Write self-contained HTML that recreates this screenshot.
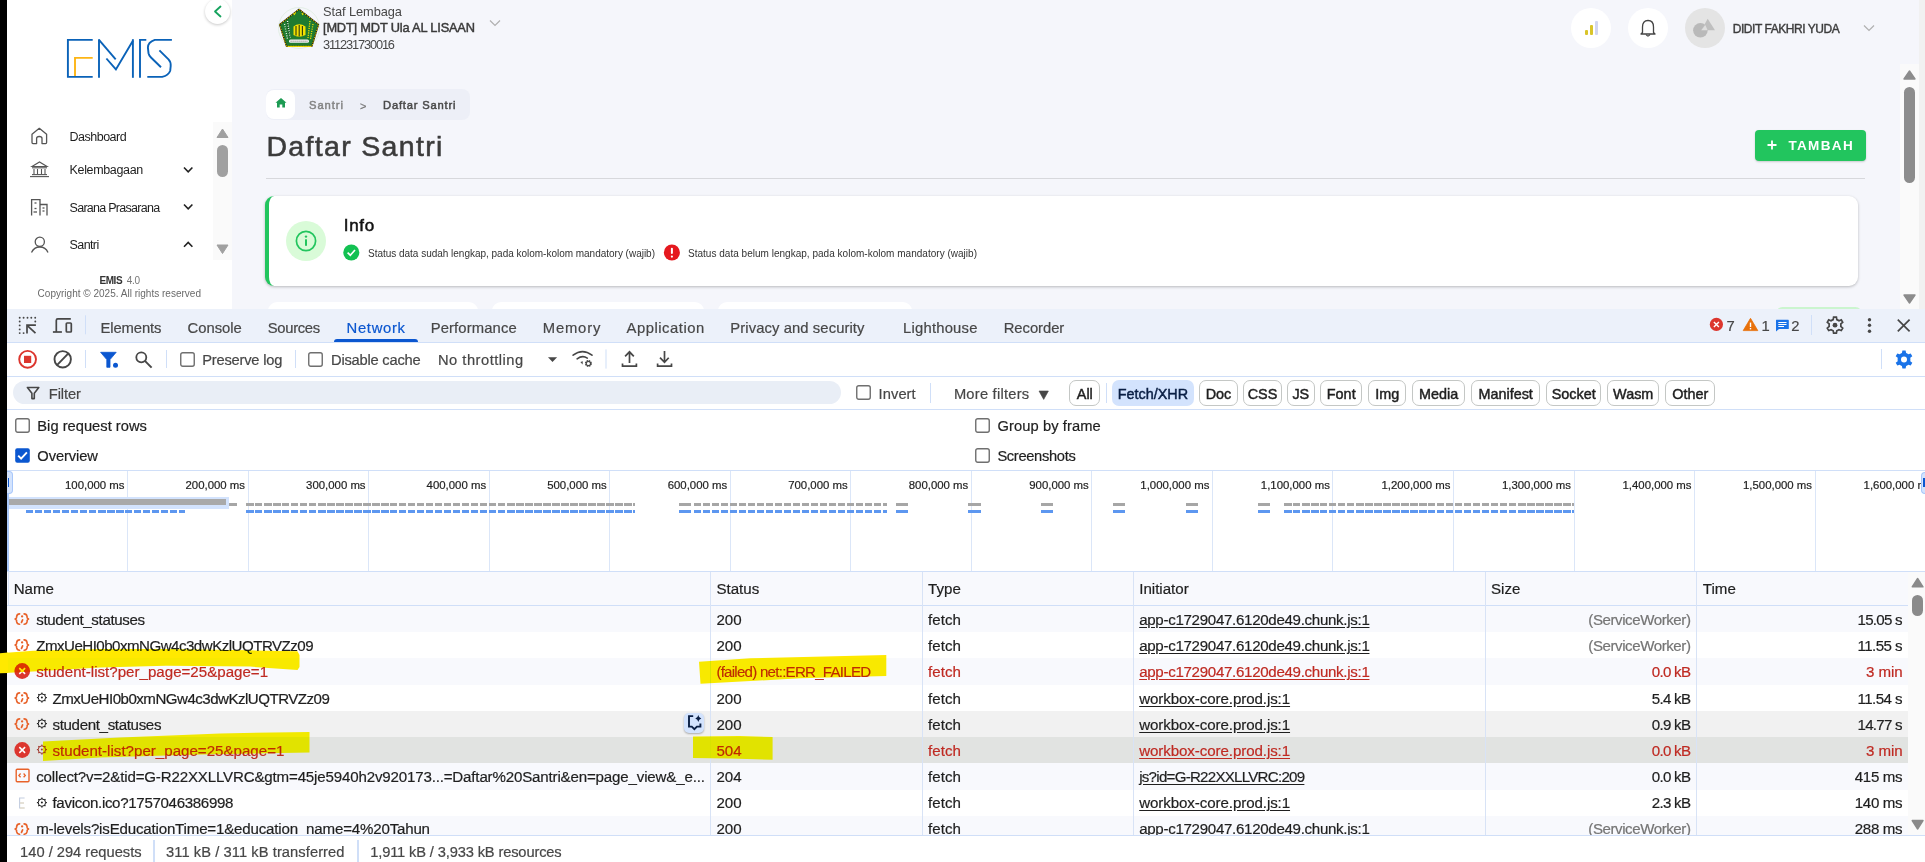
<!DOCTYPE html>
<html><head><meta charset="utf-8"><title>Daftar Santri - EMIS</title>
<style>
html,body{margin:0;padding:0;}
body{width:1925px;height:862px;overflow:hidden;position:relative;background:#fff;font-family:"Liberation Sans",sans-serif;}
.r{position:absolute;display:block;}
.t{position:absolute;white-space:nowrap;line-height:1;}
.dv .t{-webkit-text-stroke:0.2px currentColor;}
svg.r{overflow:visible;}
.hl{mix-blend-mode:darken;}
</style></head><body>

<div class="r" style="left:0;top:0;width:7px;height:862px;background:#000;z-index:5"></div>
<div class="r" style="left:0;top:0;width:1925px;height:309px;overflow:hidden">
<div class="r" style="left:7.00px;top:0.00px;width:225.00px;height:309.00px;background:#ffffff;"></div>
<div class="r" style="left:232.00px;top:0.00px;width:1687.00px;height:309.00px;background:#f5f6fb;"></div>
<div class="r" style="left:1919.00px;top:0.00px;width:6.00px;height:309.00px;background:#f1f1f1;"></div>
<svg class="r" style="left:60.00px;top:32.00px;" width="120" height="52" viewBox="0 0 120 52"><g fill="none" stroke="#0a62b8" stroke-width="1.9" stroke-linecap="butt" stroke-linejoin="miter"><polyline points="32.7,7.9 7.9,7.9 7.9,44.9 32.7,44.9"/><polyline points="39,7.2 39,45.8"/><polyline points="39,7.9 55.7,27.4"/><polyline points="46.4,26.5 55.9,37.4 72.9,8.7"/><polyline points="72.9,7.2 72.9,45.8"/><polyline points="86.3,7.9 80,7.9 80,45.8"/><path d="M111.9,7.9 L94.8,7.9 Q88,10 87.9,15.6 L88.5,21.2 Q89,23.5 91,25.5 L101,35.2"/><path d="M99.4,18.4 L108.5,27.4 Q111,30 110.7,34 L110.2,38.7 Q108.5,43.5 102.2,44.9 L87.3,44.9"/></g><polyline fill="none" stroke="#fdb515" stroke-width="1.9" points="32.7,25.9 15,25.9 15,44"/></svg>
<div class="r" style="left:205px;top:-1px;width:25px;height:25px;border-radius:50%;background:#fff;box-shadow:0 1px 3px rgba(0,0,0,.22)"></div>
<svg class="r" style="left:212.00px;top:5.00px;" width="12" height="13" viewBox="0 0 12 13"><polyline points="8.5,1.5 3,6.5 8.5,11.5" fill="none" stroke="#16a35e" stroke-width="1.8" stroke-linecap="round" stroke-linejoin="round"/></svg>
<svg class="r" style="left:30.00px;top:127.00px;" width="19" height="18" viewBox="0 0 19 18"><path d="M2,15.6 L2,7.2 L9.3,1.3 L16.6,7.2 L16.6,15.6 Q16.6,16.6 15.6,16.6 L12,16.6 L12,11.5 Q12,9.5 9.3,9.5 Q6.6,9.5 6.6,11.5 L6.6,16.6 L3,16.6 Q2,16.6 2,15.6 Z" fill="none" stroke="#555" stroke-width="1.3" stroke-linejoin="round"/></svg>
<svg class="r" style="left:29.00px;top:161.00px;" width="21" height="17" viewBox="0 0 21 17"><g fill="none" stroke="#555" stroke-width="1.1"><path d="M3,5.5 L10.5,1 L18,5.5 Z"/><line x1="3" y1="6.8" x2="18" y2="6.8"/><line x1="5" y1="8" x2="5" y2="13"/><line x1="8.5" y1="8" x2="8.5" y2="13"/><line x1="12.5" y1="8" x2="12.5" y2="13"/><line x1="16" y1="8" x2="16" y2="13"/><line x1="3" y1="13.6" x2="18" y2="13.6"/><line x1="1" y1="15.6" x2="20" y2="15.6"/></g></svg>
<svg class="r" style="left:30.00px;top:198.00px;" width="20" height="19" viewBox="0 0 20 19"><g fill="none" stroke="#555" stroke-width="1.3"><path d="M1.6,17.5 L1.6,1.6 L10,1.6 L10,17.5"/><path d="M10,6.5 L17,6.5 L17,17.5"/><line x1="4.5" y1="5" x2="6.5" y2="5"/><line x1="4.5" y1="10.5" x2="6.5" y2="10.5"/><line x1="3.5" y1="14" x2="7" y2="14"/><line x1="12.5" y1="10" x2="14.5" y2="10"/><line x1="12.5" y1="13" x2="14.5" y2="13"/></g></svg>
<svg class="r" style="left:30.00px;top:236.00px;" width="20" height="18" viewBox="0 0 20 18"><g fill="none" stroke="#555" stroke-width="1.3"><circle cx="9.8" cy="5.8" r="4.6"/><path d="M1.5,16.5 Q4,11 9.8,11 Q15.6,11 18,16.5"/></g></svg>
<div class="t" style="left:69.60px;top:130.92px;font-size:12.50px;color:#1e1e1e;letter-spacing:-0.519px;">Dashboard</div>
<div class="t" style="left:69.60px;top:164.12px;font-size:12.50px;color:#1e1e1e;letter-spacing:-0.354px;">Kelembagaan</div>
<div class="t" style="left:69.60px;top:201.52px;font-size:12.50px;color:#1e1e1e;letter-spacing:-0.730px;">Sarana Prasarana</div>
<div class="t" style="left:69.60px;top:238.92px;font-size:12.50px;color:#1e1e1e;letter-spacing:-0.611px;">Santri</div>
<svg class="r" style="left:183.00px;top:165.50px;" width="11" height="8" viewBox="0 0 11 8"><polyline points="1,1.5 5.2,5.8 9.4,1.5" fill="none" stroke="#222" stroke-width="1.6"/></svg>
<svg class="r" style="left:183.00px;top:203.00px;" width="11" height="8" viewBox="0 0 11 8"><polyline points="1,1.5 5.2,5.8 9.4,1.5" fill="none" stroke="#222" stroke-width="1.6"/></svg>
<svg class="r" style="left:183.00px;top:241.00px;" width="11" height="8" viewBox="0 0 11 8"><polyline points="1,5.8 5.2,1.5 9.4,5.8" fill="none" stroke="#222" stroke-width="1.6"/></svg>
<div class="r" style="left:213.00px;top:122.00px;width:19.00px;height:137.50px;background:#fafafa;"></div>
<svg class="r" style="left:216.00px;top:128.00px;" width="13" height="10" viewBox="0 0 13 10"><path d="M6.5,1 L12,9.5 L1,9.5 Z" fill="#a0a0a0" stroke="#a0a0a0" stroke-width="1" stroke-linejoin="round"/></svg>
<div class="r" style="left:217.00px;top:144.60px;width:11.00px;height:32.20px;background:#a0a0a0;border-radius:5.5px"></div>
<svg class="r" style="left:216.00px;top:244.00px;" width="13" height="10" viewBox="0 0 13 10"><path d="M1,1 L12,1 L6.5,9.5 Z" fill="#a0a0a0" stroke="#a0a0a0" stroke-width="1" stroke-linejoin="round"/></svg>
<div class="t" style="left:99.40px;top:275.64px;font-size:10.00px;color:#333;font-weight:bold;letter-spacing:-0.416px;">EMIS</div>
<div class="t" style="left:126.70px;top:275.64px;font-size:10.00px;color:#777;letter-spacing:-0.301px;">4.0</div>
<div class="t" style="left:37.60px;top:288.94px;font-size:10.00px;color:#6a6a6a;letter-spacing:0.011px;">Copyright © 2025. All rights reserved</div>
<svg class="r" style="left:278.00px;top:7.00px;" width="42" height="42" viewBox="0 0 42 42"><circle cx="21" cy="21" r="20.5" fill="none" stroke="#d6ead6" stroke-width="0.6"/><path d="M21,2.3 L40.5,17.6 L33.9,39.3 L8.5,39.3 L1.6,17.6 Z" fill="#1e7b30" stroke="#111" stroke-width="1.3" stroke-linejoin="round"/><path d="M21,2.3 L40.5,17.6 L33.9,39.3 L8.5,39.3 L1.6,17.6 Z" fill="none" stroke="#f2dd00" stroke-width="0.9" stroke-dasharray="1.6,0.9" stroke-linejoin="round"/><path d="M15.5,19.5 Q21,15 27.5,19.5 L27.5,28 Q21,31.5 15.5,28 Z" fill="#f3e000"/><path d="M18,19 L18,28.5 M21.2,18 L21.2,29.5 M24.4,19 L24.4,28.5" stroke="#2a3a10" stroke-width="1.1"/><path d="M9.5,14 L12,31 M6.5,17 L9.5,32" stroke="#f5f5f5" stroke-width="1.3" stroke-dasharray="1,1.3"/><path d="M9,15 L11.5,31" stroke="#111" stroke-width="0.8" stroke-dasharray="1,1.5"/><path d="M32,14 L30,31 M35,17 L32.5,32" stroke="#f3e000" stroke-width="1.3" stroke-dasharray="1.2,1.1"/><path d="M17.5,5.5 L16,8 M25,8 L24,6" stroke="#f3e000" stroke-width="1.2"/><rect x="11" y="32.6" width="20" height="3.2" rx="1.6" fill="#f4f4f4"/><path d="M12.5,34.2 L29.5,34.2" stroke="#333" stroke-width="0.6" stroke-dasharray="1.2,0.8"/><path d="M9.5,39.4 L33,39.4" stroke="#f2dd00" stroke-width="1"/></svg>
<div class="t" style="left:323.00px;top:5.76px;font-size:12.80px;color:#474747;letter-spacing:-0.064px;">Staf Lembaga</div>
<div class="t" style="left:323.00px;top:21.66px;font-size:12.80px;color:#3a3a3a;letter-spacing:-0.171px;-webkit-text-stroke:0.45px #3a3a3a;">[MDT] MDT Ula AL LISAAN</div>
<div class="t" style="left:323.00px;top:39.06px;font-size:12.80px;color:#474747;letter-spacing:-1.134px;">311231730016</div>
<svg class="r" style="left:489.00px;top:19.00px;" width="12" height="8" viewBox="0 0 12 8"><polyline points="1,1.5 6,6.5 11,1.5" fill="none" stroke="#b0b0b0" stroke-width="1.2"/></svg>
<div class="r" style="left:1571px;top:8px;width:40px;height:40px;border-radius:50%;background:#fff"></div>
<div class="r" style="left:1584.90px;top:29.70px;width:3.10px;height:5.10px;background:#d9c42a;border-radius:1px"></div>
<div class="r" style="left:1590.00px;top:25.40px;width:2.90px;height:9.40px;background:#d9c42a;border-radius:1px"></div>
<div class="r" style="left:1595.00px;top:20.90px;width:3.00px;height:13.90px;background:#d2d6f0;border-radius:1px"></div>
<div class="r" style="left:1628px;top:8px;width:40px;height:40px;border-radius:50%;background:#fff"></div>
<svg class="r" style="left:1638.00px;top:18.00px;" width="20" height="20" viewBox="0 0 20 20"><path d="M4.5,14.5 L4.5,9 Q4.5,2.5 10,2.5 Q15.5,2.5 15.5,9 L15.5,14.5 L17,16 L3,16 Z" fill="none" stroke="#444" stroke-width="1.3" stroke-linejoin="round"/><path d="M8,16.5 Q10,19.5 12,16.5" fill="none" stroke="#444" stroke-width="1.3"/></svg>
<div class="r" style="left:1684.5px;top:8px;width:40px;height:40px;border-radius:50%;background:#e4e4e4"></div>
<svg class="r" style="left:1690.00px;top:14.00px;" width="40" height="30" viewBox="0 0 40 30"><circle cx="10.4" cy="16.3" r="7.3" fill="#b9b9b9"/><path d="M17.7,4.7 L25,16.3 L11.2,16.3 Z" fill="#bfbfbf"/><path d="M11.2,16.3 L15.3,10.9 L17.6,16.3 Z" fill="#dedede"/></svg>
<div class="t" style="left:1732.70px;top:22.84px;font-size:12.00px;color:#3d3d3d;letter-spacing:-0.453px;-webkit-text-stroke:0.4px #3d3d3d;">DIDIT FAKHRI YUDA</div>
<svg class="r" style="left:1863.00px;top:24.00px;" width="12" height="8" viewBox="0 0 12 8"><polyline points="1,1.5 6,6.5 11,1.5" fill="none" stroke="#b0b0b0" stroke-width="1.2"/></svg>
<div class="r" style="left:1900.00px;top:64.00px;width:19.00px;height:245.00px;background:#fafafa;"></div>
<svg class="r" style="left:1903.00px;top:70.00px;" width="13" height="10" viewBox="0 0 13 10"><path d="M6.5,1 L12,9 L1,9 Z" fill="#8c8c8c" stroke="#8c8c8c" stroke-width="1.4" stroke-linejoin="round"/></svg>
<div class="r" style="left:1904.00px;top:87.00px;width:11.00px;height:96.00px;background:#8c8c8c;border-radius:5.5px"></div>
<svg class="r" style="left:1903.00px;top:294.00px;" width="13" height="10" viewBox="0 0 13 10"><path d="M1,1 L12,1 L6.5,9 Z" fill="#8c8c8c" stroke="#8c8c8c" stroke-width="1.4" stroke-linejoin="round"/></svg>
<div class="r" style="left:266.00px;top:89.00px;width:203.50px;height:31.00px;background:#edeff7;border-radius:8px"></div>
<div class="r" style="left:266.00px;top:90.00px;width:29.00px;height:29.00px;background:#ffffff;border-radius:8px"></div>
<svg class="r" style="left:275.00px;top:97.00px;" width="12" height="11" viewBox="0 0 12 11"><path d="M6,1 L11.5,5.8 L10,5.8 L10,10.5 L7.3,10.5 L7.3,7.5 L4.7,7.5 L4.7,10.5 L2,10.5 L2,5.8 L0.5,5.8 Z" fill="#1c9b53"/></svg>
<div class="t" style="left:309.00px;top:99.62px;font-size:11.20px;color:#858585;letter-spacing:0.948px;-webkit-text-stroke:0.5px #858585;">Santri</div>
<div class="t" style="left:360.00px;top:101.19px;font-size:11.00px;color:#777;-webkit-text-stroke:0.2px #777;">&gt;</div>
<div class="t" style="left:383.00px;top:99.62px;font-size:11.20px;color:#4a4a4a;letter-spacing:0.803px;-webkit-text-stroke:0.5px #4a4a4a;">Daftar Santri</div>
<div class="t" style="left:266.40px;top:132.17px;font-size:28.50px;color:#3b3b3b;letter-spacing:1.335px;-webkit-text-stroke:0.55px #3b3b3b;">Daftar Santri</div>
<div class="r" style="left:266.00px;top:178.00px;width:1599.00px;height:1.00px;background:#d7d8dc;"></div>
<div class="r" style="left:1755.00px;top:130.00px;width:111.00px;height:30.50px;background:#22c55e;border-radius:4px;box-shadow:0 1px 2px rgba(0,0,0,.18)"></div>
<svg class="r" style="left:1766.00px;top:139.00px;" width="12" height="12" viewBox="0 0 12 12"><path d="M6,1.5 L6,10.5 M1.5,6 L10.5,6" stroke="#fff" stroke-width="1.8"/></svg>
<div class="t" style="left:1788.40px;top:139.37px;font-size:13.50px;color:#ffffff;font-weight:bold;letter-spacing:1.363px;">TAMBAH</div>
<div class="r" style="left:265px;top:196px;width:1593px;height:90px;background:#fff;border-radius:9px;box-shadow:0 1px 3px rgba(0,0,0,.25);border-left:4px solid #22c55e;box-sizing:border-box"></div>
<div class="r" style="left:286px;top:221px;width:40px;height:40px;border-radius:50%;background:#d9fbd8"></div>
<svg class="r" style="left:294.00px;top:229.00px;" width="24" height="24" viewBox="0 0 24 24"><circle cx="12" cy="12" r="9.6" fill="none" stroke="#22c55e" stroke-width="1.7"/><circle cx="12" cy="7.6" r="1.2" fill="#22c55e"/><rect x="11" y="10.3" width="2" height="6.5" fill="#22c55e"/></svg>
<div class="t" style="left:343.70px;top:217.31px;font-size:17.00px;color:#111;letter-spacing:0.715px;-webkit-text-stroke:0.5px #111;">Info</div>
<svg class="r" style="left:343.00px;top:244.00px;" width="17" height="17" viewBox="0 0 17 17"><circle cx="8.3" cy="8.5" r="8" fill="#13c152"/><polyline points="4.6,8.6 7.3,11.2 12,6" fill="none" stroke="#fff" stroke-width="1.7"/></svg>
<div class="t" style="left:368.00px;top:249.03px;font-size:10.00px;color:#333;letter-spacing:-0.016px;">Status data sudah lengkap, pada kolom-kolom mandatory (wajib)</div>
<svg class="r" style="left:663.00px;top:244.00px;" width="17" height="17" viewBox="0 0 17 17"><circle cx="8.9" cy="8.5" r="8" fill="#e5191f"/><rect x="7.9" y="3.8" width="2" height="6.3" rx="1" fill="#fff"/><circle cx="8.9" cy="12.6" r="1.1" fill="#fff"/></svg>
<div class="t" style="left:688.00px;top:249.03px;font-size:10.00px;color:#333;letter-spacing:0.018px;">Status data belum lengkap, pada kolom-kolom mandatory (wajib)</div>
<div class="r" style="left:268.00px;top:302.00px;width:210.00px;height:18.00px;background:#ffffff;border-radius:11px"></div>
<div class="r" style="left:492.00px;top:302.00px;width:212.00px;height:18.00px;background:#ffffff;border-radius:11px"></div>
<div class="r" style="left:718.00px;top:302.00px;width:194.00px;height:18.00px;background:#ffffff;border-radius:11px"></div>
<div class="r" style="left:1776.00px;top:307.00px;width:86.00px;height:13.00px;background:#cbf5cf;border-radius:8px"></div>
</div>
<div class="dv">
<div class="r" style="left:7.00px;top:309.00px;width:1918.00px;height:33.00px;background:#ecf1fa;"></div>
<div class="r" style="left:7.00px;top:342.00px;width:1918.00px;height:1.00px;background:#d0dff8;"></div>
<svg class="r" style="left:12.00px;top:312.00px;" width="80" height="28" viewBox="0 0 80 28"><g fill="#474747"><circle cx="7.7" cy="5.8" r="0.95"/><circle cx="11.6" cy="5.8" r="0.95"/><circle cx="15.5" cy="5.8" r="0.95"/><circle cx="19.3" cy="5.8" r="0.95"/><circle cx="23.2" cy="5.8" r="0.95"/><circle cx="7.7" cy="9.5" r="0.95"/><circle cx="7.7" cy="13.4" r="0.95"/><circle cx="7.7" cy="17.4" r="0.95"/><circle cx="7.7" cy="21.1" r="0.95"/><circle cx="23.3" cy="9.5" r="0.95"/><circle cx="11.6" cy="21.1" r="0.95"/></g><g fill="none" stroke="#474747" stroke-width="1.7"><polyline points="23.9,13.2 15,13.2 15,21.6"/><line x1="15.6" y1="13.8" x2="23.5" y2="21.2"/><path d="M58.8,6.9 L45.8,6.9 Q44.3,6.9 44.3,8.4 L44.3,20"/><line x1="40.9" y1="20" x2="49.9" y2="20"/><rect x="54.3" y="11" width="5" height="9" rx="0.8"/></g><rect x="73" y="3.3" width="1" height="19" fill="#d0dff8"/></svg>
<div class="t" style="left:100.60px;top:320.97px;font-size:14.80px;color:#474747;letter-spacing:-0.128px;">Elements</div>
<div class="t" style="left:187.60px;top:320.97px;font-size:14.80px;color:#474747;letter-spacing:-0.017px;">Console</div>
<div class="t" style="left:267.80px;top:320.97px;font-size:14.80px;color:#474747;letter-spacing:-0.332px;">Sources</div>
<div class="t" style="left:346.50px;top:320.97px;font-size:14.80px;color:#0b57d0;letter-spacing:0.704px;">Network</div>
<div class="t" style="left:430.70px;top:320.97px;font-size:14.80px;color:#474747;letter-spacing:0.128px;">Performance</div>
<div class="t" style="left:542.80px;top:320.97px;font-size:14.80px;color:#474747;letter-spacing:0.810px;">Memory</div>
<div class="t" style="left:626.50px;top:320.97px;font-size:14.80px;color:#474747;letter-spacing:0.540px;">Application</div>
<div class="t" style="left:730.30px;top:320.97px;font-size:14.80px;color:#474747;letter-spacing:0.093px;">Privacy and security</div>
<div class="t" style="left:903.10px;top:320.97px;font-size:14.80px;color:#474747;letter-spacing:0.209px;">Lighthouse</div>
<div class="t" style="left:1003.70px;top:320.97px;font-size:14.80px;color:#474747;letter-spacing:-0.038px;">Recorder</div>
<div class="r" style="left:334.30px;top:339.00px;width:83.70px;height:3.20px;background:#0b57d0;border-radius:3px 3px 0 0"></div>
<svg class="r" style="left:1708.00px;top:316.00px;" width="94" height="18" viewBox="0 0 94 18"><circle cx="8.4" cy="8.4" r="6.6" fill="#dc362e"/><path d="M5.9,5.9 L10.9,10.9 M10.9,5.9 L5.9,10.9" stroke="#fff" stroke-width="1.4"/><path d="M42.5,2.3 L49.8,14.6 L35.2,14.6 Z" fill="#e8710a" stroke="#e8710a" stroke-width="0.8" stroke-linejoin="round"/><rect x="41.8" y="6.6" width="1.4" height="4.4" fill="#fff"/><rect x="41.8" y="12" width="1.4" height="1.4" fill="#fff"/><path d="M68.4,3.8 L80.2,3.8 Q80.8,3.8 80.8,4.4 L80.8,12.4 Q80.8,13 80.2,13 L71,13 L68,15.6 L68,4.4 Q68,3.8 68.4,3.8 Z" fill="#1a73e8"/><path d="M70.3,6.5 L78.5,6.5 M70.3,8.5 L78.5,8.5 M70.3,10.5 L76,10.5" stroke="#fff" stroke-width="1"/></svg>
<div class="t" style="left:1726.60px;top:319.17px;font-size:14.80px;color:#474747;">7</div>
<div class="t" style="left:1761.50px;top:319.17px;font-size:14.80px;color:#474747;">1</div>
<div class="t" style="left:1791.30px;top:319.17px;font-size:14.80px;color:#474747;">2</div>
<div class="r" style="left:1811.00px;top:315.00px;width:1.00px;height:20.00px;background:#d0dff8;"></div>
<svg class="r" style="left:1824.50px;top:316.30px;" width="20" height="19" viewBox="0 0 20 19"><path fill="none" stroke="#474747" stroke-width="1.7" d="M8.6,1.2 L11.4,1.2 L11.8,3.6 Q13,4 14,4.8 L16.3,3.9 L17.7,6.3 L15.8,7.9 Q16,9.2 15.8,10.5 L17.7,12.1 L16.3,14.5 L14,13.6 Q13,14.4 11.8,14.8 L11.4,17.2 L8.6,17.2 L8.2,14.8 Q7,14.4 6,13.6 L3.7,14.5 L2.3,12.1 L4.2,10.5 Q4,9.2 4.2,7.9 L2.3,6.3 L3.7,3.9 L6,4.8 Q7,4 8.2,3.6 Z"/><circle cx="10" cy="9.2" r="2.4" fill="#474747"/></svg>
<svg class="r" style="left:1866.00px;top:318.00px;" width="8" height="16" viewBox="0 0 8 16"><circle cx="3.5" cy="1.8" r="1.7" fill="#474747"/><circle cx="3.5" cy="7.3" r="1.7" fill="#474747"/><circle cx="3.5" cy="13.3" r="1.7" fill="#474747"/></svg>
<svg class="r" style="left:1896.00px;top:318.00px;" width="16" height="15" viewBox="0 0 16 15"><path d="M1.8,1.6 L13.6,13.4 M13.6,1.6 L1.8,13.4" stroke="#474747" stroke-width="1.7"/></svg>
<div class="r" style="left:7.00px;top:343.00px;width:1918.00px;height:33.00px;background:#ffffff;"></div>
<div class="r" style="left:7.00px;top:376.00px;width:1918.00px;height:1.00px;background:#d0dff8;"></div>
<svg class="r" style="left:17.00px;top:349.00px;" width="22" height="22" viewBox="0 0 22 22"><circle cx="10.6" cy="10.3" r="8.4" fill="none" stroke="#dc362e" stroke-width="1.9"/><rect x="7" y="6.8" width="7.2" height="7.2" fill="#dc362e"/></svg>
<svg class="r" style="left:52.00px;top:349.00px;" width="22" height="22" viewBox="0 0 22 22"><circle cx="10.7" cy="10.3" r="8.2" fill="none" stroke="#474747" stroke-width="1.9"/><line x1="16.4" y1="4.4" x2="5" y2="16.2" stroke="#474747" stroke-width="1.9"/></svg>
<div class="r" style="left:85.00px;top:349.50px;width:1.00px;height:18.50px;background:#d0dff8;"></div>
<svg class="r" style="left:98.00px;top:350.00px;" width="22" height="20" viewBox="0 0 22 20"><path d="M2.6,2.3 L18.2,2.3 L12,9.6 L12,17.3 L8.8,17.3 L8.8,9.6 Z" fill="#0b57d0" stroke="#0b57d0" stroke-width="0.8" stroke-linejoin="round"/><circle cx="17.5" cy="15.3" r="2.5" fill="#0b57d0"/></svg>
<svg class="r" style="left:133.00px;top:350.00px;" width="22" height="20" viewBox="0 0 22 20"><circle cx="8.3" cy="7.3" r="5" fill="none" stroke="#474747" stroke-width="1.8"/><line x1="11.9" y1="10.9" x2="18.6" y2="17.6" stroke="#474747" stroke-width="2"/></svg>
<div class="r" style="left:166.00px;top:349.50px;width:1.00px;height:18.50px;background:#d0dff8;"></div>
<svg class="r" style="left:180.20px;top:352.00px;" width="15" height="15" viewBox="0 0 15 15"><rect x="0.75" y="0.75" width="13.5" height="13.5" rx="2" fill="#fff" stroke="#6f6f6f" stroke-width="1.4"/></svg>
<div class="t" style="left:202.30px;top:352.86px;font-size:14.70px;color:#474747;letter-spacing:-0.220px;">Preserve log</div>
<div class="r" style="left:295.00px;top:349.50px;width:1.00px;height:18.50px;background:#d0dff8;"></div>
<svg class="r" style="left:307.70px;top:352.00px;" width="15" height="15" viewBox="0 0 15 15"><rect x="0.75" y="0.75" width="13.5" height="13.5" rx="2" fill="#fff" stroke="#6f6f6f" stroke-width="1.4"/></svg>
<div class="t" style="left:331.00px;top:352.86px;font-size:14.70px;color:#474747;letter-spacing:-0.211px;">Disable cache</div>
<div class="t" style="left:438.00px;top:352.86px;font-size:14.70px;color:#474747;letter-spacing:0.495px;">No throttling</div>
<svg class="r" style="left:540.00px;top:345.00px;" width="140" height="28" viewBox="0 0 140 28"><path d="M8,12.2 L17.1,12.2 L12.5,16.9 Z" fill="#474747"/><g fill="none" stroke="#474747" stroke-width="1.6" stroke-linecap="round"><path d="M33.1,10.2 Q42.5,3 52,10.2"/><path d="M37.1,13.8 Q42.5,9.8 47.3,13.1"/></g><path d="M40.4,17 L42.8,16.2 L42.6,19.6 Z" fill="#474747"/><circle cx="48.4" cy="18.5" r="2.6" fill="none" stroke="#474747" stroke-width="1.7" stroke-dasharray="1.3,0.75"/><circle cx="48.4" cy="18.5" r="2.2" fill="none" stroke="#474747" stroke-width="1.2"/><rect x="65.5" y="4.4" width="1" height="19.2" fill="#d0dff8"/><g fill="none" stroke="#474747" stroke-width="1.7"><path d="M89.5,6.8 L89.5,18 M85.1,11.3 L89.5,6.8 L93.8,11.3"/><path d="M82.5,18.5 L82.5,21.1 L96.4,21.1 L96.4,18.5"/><path d="M124.5,6 L124.5,17.2 M120,12.7 L124.5,17.3 L128.7,12.7"/><path d="M117.6,18.5 L117.6,21.1 L131.5,21.1 L131.5,18.5"/></g></svg>
<div class="r" style="left:1881.00px;top:349.00px;width:1.00px;height:20.00px;background:#d0dff8;"></div>
<svg class="r" style="left:1893.50px;top:350.00px;" width="20" height="19" viewBox="0 0 20 19"><path fill="#1a73e8" d="M8.4,0.6 L11.6,0.6 L12.1,3.1 Q13.3,3.5 14.3,4.3 L16.7,3.4 L18.3,6.2 L16.3,7.8 Q16.5,9.5 16.3,11.2 L18.3,12.8 L16.7,15.6 L14.3,14.7 Q13.3,15.5 12.1,15.9 L11.6,18.4 L8.4,18.4 L7.9,15.9 Q6.7,15.5 5.7,14.7 L3.3,15.6 L1.7,12.8 L3.7,11.2 Q3.5,9.5 3.7,7.8 L1.7,6.2 L3.3,3.4 L5.7,4.3 Q6.7,3.5 7.9,3.1 Z"/><circle cx="10" cy="9.5" r="3" fill="#fff"/></svg>
<div class="r" style="left:7.00px;top:377.00px;width:1918.00px;height:32.00px;background:#ffffff;"></div>
<div class="r" style="left:7.00px;top:409.00px;width:1918.00px;height:1.00px;background:#d0dff8;"></div>
<div class="r" style="left:13.00px;top:380.70px;width:828.00px;height:23.80px;background:#e9eef6;border-radius:12px"></div>
<svg class="r" style="left:25.00px;top:385.00px;" width="17" height="16" viewBox="0 0 17 16"><path d="M2.4,2.5 L13.8,2.5 L9.3,8.3 L9.3,13.6 L6.9,13.6 L6.9,8.3 Z" fill="none" stroke="#474747" stroke-width="1.6" stroke-linejoin="round"/></svg>
<div class="t" style="left:48.80px;top:386.76px;font-size:14.70px;color:#474747;letter-spacing:-0.093px;">Filter</div>
<svg class="r" style="left:856.00px;top:385.00px;" width="15" height="15" viewBox="0 0 15 15"><rect x="0.75" y="0.75" width="13.5" height="13.5" rx="2" fill="#fff" stroke="#6f6f6f" stroke-width="1.4"/></svg>
<div class="t" style="left:878.60px;top:387.06px;font-size:14.70px;color:#474747;letter-spacing:0.067px;">Invert</div>
<div class="r" style="left:930.00px;top:383.00px;width:1.00px;height:19.50px;background:#d0dff8;"></div>
<div class="t" style="left:953.90px;top:387.06px;font-size:14.70px;color:#474747;letter-spacing:0.237px;">More filters</div>
<svg class="r" style="left:1036.00px;top:388.00px;" width="15" height="14" viewBox="0 0 15 14"><path d="M3,3 L12.4,3 L7.7,11.4 Z" fill="#474747" stroke="#474747" stroke-width="0.6" stroke-linejoin="round"/></svg>
<div class="r" style="left:1069.20px;top:380.00px;width:31.20px;height:26.00px;background:#ffffff;border-radius:7px;border:1px solid #c4c7c5;box-sizing:border-box"></div>
<div class="t" style="left:1076.80px;top:387.11px;font-size:14.40px;color:#1f1f1f;-webkit-text-stroke:0.45px #1f1f1f;">All</div>
<div class="r" style="left:1111.90px;top:380.00px;width:82.10px;height:26.00px;background:#d3e3fd;border-radius:7px"></div>
<div class="t" style="left:1117.74px;top:387.11px;font-size:14.40px;color:#0a1f44;-webkit-text-stroke:0.45px #0a1f44;">Fetch/XHR</div>
<div class="r" style="left:1199.30px;top:380.00px;width:38.40px;height:26.00px;background:#ffffff;border-radius:7px;border:1px solid #c4c7c5;box-sizing:border-box"></div>
<div class="t" style="left:1205.70px;top:387.11px;font-size:14.40px;color:#1f1f1f;-webkit-text-stroke:0.45px #1f1f1f;">Doc</div>
<div class="r" style="left:1243.30px;top:380.00px;width:38.30px;height:26.00px;background:#ffffff;border-radius:7px;border:1px solid #c4c7c5;box-sizing:border-box"></div>
<div class="t" style="left:1247.65px;top:387.11px;font-size:14.40px;color:#1f1f1f;-webkit-text-stroke:0.45px #1f1f1f;">CSS</div>
<div class="r" style="left:1287.00px;top:380.00px;width:27.60px;height:26.00px;background:#ffffff;border-radius:7px;border:1px solid #c4c7c5;box-sizing:border-box"></div>
<div class="t" style="left:1292.40px;top:387.11px;font-size:14.40px;color:#1f1f1f;-webkit-text-stroke:0.45px #1f1f1f;">JS</div>
<div class="r" style="left:1320.20px;top:380.00px;width:42.10px;height:26.00px;background:#ffffff;border-radius:7px;border:1px solid #c4c7c5;box-sizing:border-box"></div>
<div class="t" style="left:1326.84px;top:387.11px;font-size:14.40px;color:#1f1f1f;-webkit-text-stroke:0.45px #1f1f1f;">Font</div>
<div class="r" style="left:1368.40px;top:380.00px;width:37.80px;height:26.00px;background:#ffffff;border-radius:7px;border:1px solid #c4c7c5;box-sizing:border-box"></div>
<div class="t" style="left:1375.30px;top:387.11px;font-size:14.40px;color:#1f1f1f;-webkit-text-stroke:0.45px #1f1f1f;">Img</div>
<div class="r" style="left:1412.00px;top:380.00px;width:53.40px;height:26.00px;background:#ffffff;border-radius:7px;border:1px solid #c4c7c5;box-sizing:border-box"></div>
<div class="t" style="left:1419.09px;top:387.11px;font-size:14.40px;color:#1f1f1f;-webkit-text-stroke:0.45px #1f1f1f;">Media</div>
<div class="r" style="left:1471.20px;top:380.00px;width:69.00px;height:26.00px;background:#ffffff;border-radius:7px;border:1px solid #c4c7c5;box-sizing:border-box"></div>
<div class="t" style="left:1478.49px;top:387.11px;font-size:14.40px;color:#1f1f1f;-webkit-text-stroke:0.45px #1f1f1f;">Manifest</div>
<div class="r" style="left:1546.00px;top:380.00px;width:55.40px;height:26.00px;background:#ffffff;border-radius:7px;border:1px solid #c4c7c5;box-sizing:border-box"></div>
<div class="t" style="left:1551.69px;top:387.11px;font-size:14.40px;color:#1f1f1f;-webkit-text-stroke:0.45px #1f1f1f;">Socket</div>
<div class="r" style="left:1607.30px;top:380.00px;width:51.90px;height:26.00px;background:#ffffff;border-radius:7px;border:1px solid #c4c7c5;box-sizing:border-box"></div>
<div class="t" style="left:1613.12px;top:387.11px;font-size:14.40px;color:#1f1f1f;-webkit-text-stroke:0.45px #1f1f1f;">Wasm</div>
<div class="r" style="left:1665.20px;top:380.00px;width:50.10px;height:26.00px;background:#ffffff;border-radius:7px;border:1px solid #c4c7c5;box-sizing:border-box"></div>
<div class="t" style="left:1672.24px;top:387.11px;font-size:14.40px;color:#1f1f1f;-webkit-text-stroke:0.45px #1f1f1f;">Other</div>
<div class="r" style="left:1106.00px;top:383.00px;width:1.00px;height:19.50px;background:#d0dff8;"></div>
<div class="r" style="left:7.00px;top:410.00px;width:1918.00px;height:60.00px;background:#ffffff;"></div>
<svg class="r" style="left:15.00px;top:418.00px;" width="15" height="15" viewBox="0 0 15 15"><rect x="0.75" y="0.75" width="13.5" height="13.5" rx="2" fill="#fff" stroke="#6f6f6f" stroke-width="1.4"/></svg>
<div class="t" style="left:37.30px;top:418.56px;font-size:14.70px;color:#1f1f1f;letter-spacing:0.015px;">Big request rows</div>
<svg class="r" style="left:15.00px;top:448.00px;" width="15" height="15" viewBox="0 0 15 15"><rect x="0.2" y="0.2" width="14.6" height="14.6" rx="2" fill="#0b57d0"/><polyline points="3.2,7.6 6.1,10.6 11.9,4.4" fill="none" stroke="#fff" stroke-width="1.9"/></svg>
<div class="t" style="left:37.30px;top:448.66px;font-size:14.70px;color:#1f1f1f;letter-spacing:-0.095px;">Overview</div>
<svg class="r" style="left:975.40px;top:418.00px;" width="15" height="15" viewBox="0 0 15 15"><rect x="0.75" y="0.75" width="13.5" height="13.5" rx="2" fill="#fff" stroke="#6f6f6f" stroke-width="1.4"/></svg>
<div class="t" style="left:997.40px;top:418.56px;font-size:14.70px;color:#1f1f1f;letter-spacing:0.098px;">Group by frame</div>
<svg class="r" style="left:975.40px;top:448.00px;" width="15" height="15" viewBox="0 0 15 15"><rect x="0.75" y="0.75" width="13.5" height="13.5" rx="2" fill="#fff" stroke="#6f6f6f" stroke-width="1.4"/></svg>
<div class="t" style="left:997.40px;top:448.66px;font-size:14.70px;color:#1f1f1f;letter-spacing:-0.331px;">Screenshots</div>
<div class="r" style="left:7.00px;top:470.00px;width:1918.00px;height:1.00px;background:#d0dff8;"></div>
<div class="r" style="left:7.00px;top:471.00px;width:1918.00px;height:100.00px;background:#ffffff;"></div>
<div class="r" style="left:7.00px;top:571.00px;width:1918.00px;height:1.00px;background:#d0dff8;"></div>
<div class="r" style="left:127.04px;top:471.00px;width:1.00px;height:100.00px;background:#dbe6f8;"></div>
<div class="t" style="left:64.97px;top:479.65px;font-size:11.40px;color:#1f1f1f;">100,000 ms</div>
<div class="r" style="left:247.58px;top:471.00px;width:1.00px;height:100.00px;background:#dbe6f8;"></div>
<div class="t" style="left:185.51px;top:479.65px;font-size:11.40px;color:#1f1f1f;">200,000 ms</div>
<div class="r" style="left:368.12px;top:471.00px;width:1.00px;height:100.00px;background:#dbe6f8;"></div>
<div class="t" style="left:306.05px;top:479.65px;font-size:11.40px;color:#1f1f1f;">300,000 ms</div>
<div class="r" style="left:488.66px;top:471.00px;width:1.00px;height:100.00px;background:#dbe6f8;"></div>
<div class="t" style="left:426.59px;top:479.65px;font-size:11.40px;color:#1f1f1f;">400,000 ms</div>
<div class="r" style="left:609.20px;top:471.00px;width:1.00px;height:100.00px;background:#dbe6f8;"></div>
<div class="t" style="left:547.13px;top:479.65px;font-size:11.40px;color:#1f1f1f;">500,000 ms</div>
<div class="r" style="left:729.74px;top:471.00px;width:1.00px;height:100.00px;background:#dbe6f8;"></div>
<div class="t" style="left:667.67px;top:479.65px;font-size:11.40px;color:#1f1f1f;">600,000 ms</div>
<div class="r" style="left:850.28px;top:471.00px;width:1.00px;height:100.00px;background:#dbe6f8;"></div>
<div class="t" style="left:788.21px;top:479.65px;font-size:11.40px;color:#1f1f1f;">700,000 ms</div>
<div class="r" style="left:970.82px;top:471.00px;width:1.00px;height:100.00px;background:#dbe6f8;"></div>
<div class="t" style="left:908.75px;top:479.65px;font-size:11.40px;color:#1f1f1f;">800,000 ms</div>
<div class="r" style="left:1091.36px;top:471.00px;width:1.00px;height:100.00px;background:#dbe6f8;"></div>
<div class="t" style="left:1029.29px;top:479.65px;font-size:11.40px;color:#1f1f1f;">900,000 ms</div>
<div class="r" style="left:1211.90px;top:471.00px;width:1.00px;height:100.00px;background:#dbe6f8;"></div>
<div class="t" style="left:1140.32px;top:479.65px;font-size:11.40px;color:#1f1f1f;">1,000,000 ms</div>
<div class="r" style="left:1332.44px;top:471.00px;width:1.00px;height:100.00px;background:#dbe6f8;"></div>
<div class="t" style="left:1260.86px;top:479.65px;font-size:11.40px;color:#1f1f1f;">1,100,000 ms</div>
<div class="r" style="left:1452.98px;top:471.00px;width:1.00px;height:100.00px;background:#dbe6f8;"></div>
<div class="t" style="left:1381.40px;top:479.65px;font-size:11.40px;color:#1f1f1f;">1,200,000 ms</div>
<div class="r" style="left:1573.52px;top:471.00px;width:1.00px;height:100.00px;background:#dbe6f8;"></div>
<div class="t" style="left:1501.94px;top:479.65px;font-size:11.40px;color:#1f1f1f;">1,300,000 ms</div>
<div class="r" style="left:1694.06px;top:471.00px;width:1.00px;height:100.00px;background:#dbe6f8;"></div>
<div class="t" style="left:1622.48px;top:479.65px;font-size:11.40px;color:#1f1f1f;">1,400,000 ms</div>
<div class="r" style="left:1814.60px;top:471.00px;width:1.00px;height:100.00px;background:#dbe6f8;"></div>
<div class="t" style="left:1743.02px;top:479.65px;font-size:11.40px;color:#1f1f1f;">1,500,000 ms</div>
<div class="r" style="left:1935.14px;top:471.00px;width:1.00px;height:100.00px;background:#dbe6f8;"></div>
<div class="t" style="left:1863.56px;top:479.65px;font-size:11.40px;color:#1f1f1f;">1,600,000 ms</div>
<div class="r" style="left:7.00px;top:494.00px;width:2.00px;height:77.00px;background:#a8c7fa;"></div>
<div class="r" style="left:7.00px;top:471.30px;width:6.00px;height:23.20px;background:#d3e3fd;border-radius:0 4px 4px 0;border:1px solid #a8c7fa;border-left:none;box-sizing:border-box"></div>
<div class="r" style="left:7.80px;top:477.90px;width:1.50px;height:9.10px;background:#0b57d0;"></div>
<div class="r" style="left:1921.00px;top:471.60px;width:4.00px;height:22.90px;background:#d3e3fd;border-radius:4px 0 0 4px;border:1px solid #a8c7fa;border-right:none;box-sizing:border-box"></div>
<div class="r" style="left:1923.00px;top:477.90px;width:2.00px;height:9.10px;background:#0b57d0;"></div>
<div class="r" style="left:9.00px;top:497.00px;width:220.00px;height:11.50px;background:#d3e3fd;"></div>
<div class="r" style="left:9.00px;top:499.20px;width:217.00px;height:5.80px;background:#a9a9a9;"></div>
<div class="r" style="left:228.70px;top:502.80px;width:8.00px;height:2.80px;background:#a6a6a6;"></div>
<div class="r" style="left:245.50px;top:502.80px;width:389.00px;height:2.80px;background:repeating-linear-gradient(90deg,#a6a6a6 0 7.5px,transparent 7.5px 9px);"></div>
<div class="r" style="left:679.30px;top:502.80px;width:11.70px;height:2.80px;background:#a6a6a6;"></div>
<div class="r" style="left:693.80px;top:502.80px;width:193.50px;height:2.80px;background:repeating-linear-gradient(90deg,#a6a6a6 0 7.5px,transparent 7.5px 9px);"></div>
<div class="r" style="left:896.40px;top:502.80px;width:12.00px;height:2.80px;background:#a6a6a6;"></div>
<div class="r" style="left:968.40px;top:502.80px;width:12.30px;height:2.80px;background:#a6a6a6;"></div>
<div class="r" style="left:1040.70px;top:502.80px;width:12.00px;height:2.80px;background:#a6a6a6;"></div>
<div class="r" style="left:1112.70px;top:502.80px;width:12.80px;height:2.80px;background:#a6a6a6;"></div>
<div class="r" style="left:1185.50px;top:502.80px;width:12.00px;height:2.80px;background:#a6a6a6;"></div>
<div class="r" style="left:1257.70px;top:502.80px;width:12.00px;height:2.80px;background:#a6a6a6;"></div>
<div class="r" style="left:1284.30px;top:502.80px;width:289.70px;height:2.80px;background:repeating-linear-gradient(90deg,#a6a6a6 0 7.5px,transparent 7.5px 9px);"></div>
<div class="r" style="left:25.50px;top:510.20px;width:159.50px;height:3.00px;background:repeating-linear-gradient(90deg,#5d97f0 0 7.5px,transparent 7.5px 9px);"></div>
<div class="r" style="left:245.50px;top:510.20px;width:389.00px;height:3.00px;background:repeating-linear-gradient(90deg,#5d97f0 0 7.5px,transparent 7.5px 9px);"></div>
<div class="r" style="left:679.30px;top:510.20px;width:11.70px;height:3.00px;background:#5d97f0;"></div>
<div class="r" style="left:693.80px;top:510.20px;width:193.50px;height:3.00px;background:repeating-linear-gradient(90deg,#5d97f0 0 7.5px,transparent 7.5px 9px);"></div>
<div class="r" style="left:896.40px;top:510.20px;width:12.00px;height:3.00px;background:#5d97f0;"></div>
<div class="r" style="left:968.40px;top:510.20px;width:12.30px;height:3.00px;background:#5d97f0;"></div>
<div class="r" style="left:1040.70px;top:510.20px;width:12.00px;height:3.00px;background:#5d97f0;"></div>
<div class="r" style="left:1112.70px;top:510.20px;width:12.80px;height:3.00px;background:#5d97f0;"></div>
<div class="r" style="left:1185.50px;top:510.20px;width:12.00px;height:3.00px;background:#5d97f0;"></div>
<div class="r" style="left:1257.70px;top:510.20px;width:12.00px;height:3.00px;background:#5d97f0;"></div>
<div class="r" style="left:1284.30px;top:510.20px;width:289.70px;height:3.00px;background:repeating-linear-gradient(90deg,#5d97f0 0 7.5px,transparent 7.5px 9px);"></div>
<div class="r" style="left:7.00px;top:572.00px;width:1901.00px;height:33.00px;background:#f8f9fd;"></div>
<div class="r" style="left:7.00px;top:605.00px;width:1901.00px;height:1.00px;background:#d0dff8;"></div>
<div class="r" style="left:1908.00px;top:572.00px;width:17.00px;height:263.00px;background:#fafafa;"></div>
<div class="r" style="left:0;top:0;width:1925px;height:835px;overflow:hidden"><div class="r" style="left:7.00px;top:605.80px;width:1901.00px;height:26.25px;background:#f8f9fd;"></div>
<svg class="r" style="left:13.00px;top:611.90px;" width="18" height="14" viewBox="0 0 18 14"><g fill="none" stroke="#e8622a" stroke-width="1.65" stroke-linecap="round"><path d="M6.6,1.9 Q4.1,1.9 3.7,4.3 L3.5,5.7 Q3.2,7 1.5,7 Q3.2,7 3.5,8.3 L3.7,9.9 Q4.1,12.2 6.6,12.2"/><path d="M11.1,1.9 Q13.6,1.9 14,4.3 L14.2,5.7 Q14.5,7 16.2,7 Q14.5,7 14.2,8.3 L14,9.9 Q13.6,12.2 11.1,12.2"/></g><circle cx="9.1" cy="4.4" r="1.15" fill="#e8622a"/><path d="M9.6,7.9 L8.5,10.4" stroke="#e8622a" stroke-width="1.7" stroke-linecap="round"/></svg>
<div class="t" style="left:36.20px;top:612.12px;font-size:15.10px;color:#1f1f1f;letter-spacing:-0.344px;">student_statuses</div>
<div class="t" style="left:716.40px;top:612.12px;font-size:15.10px;color:#1f1f1f;">200</div>
<div class="t" style="left:928.10px;top:612.12px;font-size:15.10px;color:#1f1f1f;">fetch</div>
<div class="t" style="left:1139.20px;top:612.12px;font-size:15.10px;color:#1f1f1f;letter-spacing:-0.304px;text-decoration:underline;text-underline-offset:1.5px;">app-c1729047.6120de49.chunk.js:1</div>
<div class="t" style="left:1588.30px;top:612.12px;font-size:15.10px;color:#757575;letter-spacing:-0.435px;">(ServiceWorker)</div>
<div class="t" style="left:1857.60px;top:612.12px;font-size:15.10px;color:#1f1f1f;letter-spacing:-0.755px;">15.05 s</div>
<div class="r" style="left:7.00px;top:632.05px;width:1901.00px;height:26.25px;background:#ffffff;"></div>
<svg class="r" style="left:13.00px;top:638.15px;" width="18" height="14" viewBox="0 0 18 14"><g fill="none" stroke="#e8622a" stroke-width="1.65" stroke-linecap="round"><path d="M6.6,1.9 Q4.1,1.9 3.7,4.3 L3.5,5.7 Q3.2,7 1.5,7 Q3.2,7 3.5,8.3 L3.7,9.9 Q4.1,12.2 6.6,12.2"/><path d="M11.1,1.9 Q13.6,1.9 14,4.3 L14.2,5.7 Q14.5,7 16.2,7 Q14.5,7 14.2,8.3 L14,9.9 Q13.6,12.2 11.1,12.2"/></g><circle cx="9.1" cy="4.4" r="1.15" fill="#e8622a"/><path d="M9.6,7.9 L8.5,10.4" stroke="#e8622a" stroke-width="1.7" stroke-linecap="round"/></svg>
<div class="t" style="left:36.20px;top:638.26px;font-size:15.10px;color:#1f1f1f;letter-spacing:-0.513px;">ZmxUeHI0b0xmNGw4c3dwKzlUQTRVZz09</div>
<div class="t" style="left:716.40px;top:638.26px;font-size:15.10px;color:#1f1f1f;">200</div>
<div class="t" style="left:928.10px;top:638.26px;font-size:15.10px;color:#1f1f1f;">fetch</div>
<div class="t" style="left:1139.20px;top:638.26px;font-size:15.10px;color:#1f1f1f;letter-spacing:-0.304px;text-decoration:underline;text-underline-offset:1.5px;">app-c1729047.6120de49.chunk.js:1</div>
<div class="t" style="left:1588.30px;top:638.26px;font-size:15.10px;color:#757575;letter-spacing:-0.435px;">(ServiceWorker)</div>
<div class="t" style="left:1857.60px;top:638.26px;font-size:15.10px;color:#1f1f1f;letter-spacing:-0.569px;">11.55 s</div>
<div class="r" style="left:7.00px;top:658.30px;width:1901.00px;height:26.25px;background:#f8f9fd;"></div>
<svg class="r" style="left:13.00px;top:663.40px;" width="18" height="16" viewBox="0 0 18 16"><circle cx="9.2" cy="8" r="7.9" fill="#dc362e"/><path d="M6.3,5.1 L12.1,10.9 M12.1,5.1 L6.3,10.9" stroke="#fff" stroke-width="1.5"/></svg>
<div class="t" style="left:36.20px;top:664.40px;font-size:15.10px;color:#bf2a22;letter-spacing:0.009px;">student-list?per_page=25&amp;page=1</div>
<div class="t" style="left:716.40px;top:664.40px;font-size:15.10px;color:#bf2a22;letter-spacing:-0.750px;">(failed) net::ERR_FAILED</div>
<div class="t" style="left:928.10px;top:664.40px;font-size:15.10px;color:#bf2a22;">fetch</div>
<div class="t" style="left:1139.20px;top:664.40px;font-size:15.10px;color:#bf2a22;letter-spacing:-0.304px;text-decoration:underline;text-underline-offset:1.5px;">app-c1729047.6120de49.chunk.js:1</div>
<div class="t" style="left:1651.80px;top:664.40px;font-size:15.10px;color:#bf2a22;letter-spacing:-0.722px;">0.0 kB</div>
<div class="t" style="left:1866.00px;top:664.40px;font-size:15.10px;color:#bf2a22;letter-spacing:-0.081px;">3 min</div>
<div class="r" style="left:7.00px;top:684.55px;width:1901.00px;height:26.25px;background:#ffffff;"></div>
<svg class="r" style="left:13.00px;top:690.65px;" width="18" height="14" viewBox="0 0 18 14"><g fill="none" stroke="#e8622a" stroke-width="1.65" stroke-linecap="round"><path d="M6.6,1.9 Q4.1,1.9 3.7,4.3 L3.5,5.7 Q3.2,7 1.5,7 Q3.2,7 3.5,8.3 L3.7,9.9 Q4.1,12.2 6.6,12.2"/><path d="M11.1,1.9 Q13.6,1.9 14,4.3 L14.2,5.7 Q14.5,7 16.2,7 Q14.5,7 14.2,8.3 L14,9.9 Q13.6,12.2 11.1,12.2"/></g><circle cx="9.1" cy="4.4" r="1.15" fill="#e8622a"/><path d="M9.6,7.9 L8.5,10.4" stroke="#e8622a" stroke-width="1.7" stroke-linecap="round"/></svg>
<svg class="r" style="left:36.00px;top:691.65px;" width="12" height="12" viewBox="0 0 12 12"><g transform="translate(5.9,5.6)" fill="#1f1f1f"><circle r="3.7" fill="none" stroke="#1f1f1f" stroke-width="1.0"/><rect x="-0.6" y="-5" width="1.2" height="1.4" transform="rotate(0)"/><rect x="-0.6" y="-5" width="1.2" height="1.4" transform="rotate(45)"/><rect x="-0.6" y="-5" width="1.2" height="1.4" transform="rotate(90)"/><rect x="-0.6" y="-5" width="1.2" height="1.4" transform="rotate(135)"/><rect x="-0.6" y="-5" width="1.2" height="1.4" transform="rotate(180)"/><rect x="-0.6" y="-5" width="1.2" height="1.4" transform="rotate(225)"/><rect x="-0.6" y="-5" width="1.2" height="1.4" transform="rotate(270)"/><rect x="-0.6" y="-5" width="1.2" height="1.4" transform="rotate(315)"/><circle r="1.0"/></g></svg>
<div class="t" style="left:52.50px;top:690.54px;font-size:15.10px;color:#1f1f1f;letter-spacing:-0.513px;">ZmxUeHI0b0xmNGw4c3dwKzlUQTRVZz09</div>
<div class="t" style="left:716.40px;top:690.54px;font-size:15.10px;color:#1f1f1f;">200</div>
<div class="t" style="left:928.10px;top:690.54px;font-size:15.10px;color:#1f1f1f;">fetch</div>
<div class="t" style="left:1139.20px;top:690.54px;font-size:15.10px;color:#1f1f1f;letter-spacing:-0.083px;text-decoration:underline;text-underline-offset:1.5px;">workbox-core.prod.js:1</div>
<div class="t" style="left:1651.80px;top:690.54px;font-size:15.10px;color:#1f1f1f;letter-spacing:-0.722px;">5.4 kB</div>
<div class="t" style="left:1857.60px;top:690.54px;font-size:15.10px;color:#1f1f1f;letter-spacing:-0.569px;">11.54 s</div>
<div class="r" style="left:7.00px;top:710.80px;width:1901.00px;height:26.25px;background:#f1f1f1;"></div>
<svg class="r" style="left:13.00px;top:716.90px;" width="18" height="14" viewBox="0 0 18 14"><g fill="none" stroke="#e8622a" stroke-width="1.65" stroke-linecap="round"><path d="M6.6,1.9 Q4.1,1.9 3.7,4.3 L3.5,5.7 Q3.2,7 1.5,7 Q3.2,7 3.5,8.3 L3.7,9.9 Q4.1,12.2 6.6,12.2"/><path d="M11.1,1.9 Q13.6,1.9 14,4.3 L14.2,5.7 Q14.5,7 16.2,7 Q14.5,7 14.2,8.3 L14,9.9 Q13.6,12.2 11.1,12.2"/></g><circle cx="9.1" cy="4.4" r="1.15" fill="#e8622a"/><path d="M9.6,7.9 L8.5,10.4" stroke="#e8622a" stroke-width="1.7" stroke-linecap="round"/></svg>
<svg class="r" style="left:36.00px;top:717.90px;" width="12" height="12" viewBox="0 0 12 12"><g transform="translate(5.9,5.6)" fill="#1f1f1f"><circle r="3.7" fill="none" stroke="#1f1f1f" stroke-width="1.0"/><rect x="-0.6" y="-5" width="1.2" height="1.4" transform="rotate(0)"/><rect x="-0.6" y="-5" width="1.2" height="1.4" transform="rotate(45)"/><rect x="-0.6" y="-5" width="1.2" height="1.4" transform="rotate(90)"/><rect x="-0.6" y="-5" width="1.2" height="1.4" transform="rotate(135)"/><rect x="-0.6" y="-5" width="1.2" height="1.4" transform="rotate(180)"/><rect x="-0.6" y="-5" width="1.2" height="1.4" transform="rotate(225)"/><rect x="-0.6" y="-5" width="1.2" height="1.4" transform="rotate(270)"/><rect x="-0.6" y="-5" width="1.2" height="1.4" transform="rotate(315)"/><circle r="1.0"/></g></svg>
<div class="t" style="left:52.50px;top:716.68px;font-size:15.10px;color:#1f1f1f;letter-spacing:-0.344px;">student_statuses</div>
<div class="t" style="left:716.40px;top:716.68px;font-size:15.10px;color:#1f1f1f;">200</div>
<div class="t" style="left:928.10px;top:716.68px;font-size:15.10px;color:#1f1f1f;">fetch</div>
<div class="t" style="left:1139.20px;top:716.68px;font-size:15.10px;color:#1f1f1f;letter-spacing:-0.083px;text-decoration:underline;text-underline-offset:1.5px;">workbox-core.prod.js:1</div>
<div class="t" style="left:1651.80px;top:716.68px;font-size:15.10px;color:#1f1f1f;letter-spacing:-0.722px;">0.9 kB</div>
<div class="t" style="left:1857.60px;top:716.68px;font-size:15.10px;color:#1f1f1f;letter-spacing:-0.755px;">14.77 s</div>
<div class="r" style="left:7.00px;top:737.05px;width:1901.00px;height:26.25px;background:#e1e3e1;"></div>
<svg class="r" style="left:13.00px;top:742.15px;" width="18" height="16" viewBox="0 0 18 16"><circle cx="9.2" cy="8" r="7.9" fill="#dc362e"/><path d="M6.3,5.1 L12.1,10.9 M12.1,5.1 L6.3,10.9" stroke="#fff" stroke-width="1.5"/></svg>
<svg class="r" style="left:36.00px;top:744.15px;" width="12" height="12" viewBox="0 0 12 12"><g transform="translate(5.9,5.6)" fill="#a33b2f"><circle r="3.7" fill="none" stroke="#a33b2f" stroke-width="1.0"/><rect x="-0.6" y="-5" width="1.2" height="1.4" transform="rotate(0)"/><rect x="-0.6" y="-5" width="1.2" height="1.4" transform="rotate(45)"/><rect x="-0.6" y="-5" width="1.2" height="1.4" transform="rotate(90)"/><rect x="-0.6" y="-5" width="1.2" height="1.4" transform="rotate(135)"/><rect x="-0.6" y="-5" width="1.2" height="1.4" transform="rotate(180)"/><rect x="-0.6" y="-5" width="1.2" height="1.4" transform="rotate(225)"/><rect x="-0.6" y="-5" width="1.2" height="1.4" transform="rotate(270)"/><rect x="-0.6" y="-5" width="1.2" height="1.4" transform="rotate(315)"/><circle r="1.0"/></g></svg>
<div class="t" style="left:52.50px;top:742.82px;font-size:15.10px;color:#bf2a22;letter-spacing:0.009px;">student-list?per_page=25&amp;page=1</div>
<div class="t" style="left:716.40px;top:742.82px;font-size:15.10px;color:#bf2a22;">504</div>
<div class="t" style="left:928.10px;top:742.82px;font-size:15.10px;color:#bf2a22;">fetch</div>
<div class="t" style="left:1139.20px;top:742.82px;font-size:15.10px;color:#bf2a22;letter-spacing:-0.083px;text-decoration:underline;text-underline-offset:1.5px;">workbox-core.prod.js:1</div>
<div class="t" style="left:1651.80px;top:742.82px;font-size:15.10px;color:#bf2a22;letter-spacing:-0.722px;">0.0 kB</div>
<div class="t" style="left:1866.00px;top:742.82px;font-size:15.10px;color:#bf2a22;letter-spacing:-0.081px;">3 min</div>
<div class="r" style="left:7.00px;top:763.30px;width:1901.00px;height:26.25px;background:#f8f9fd;"></div>
<svg class="r" style="left:13.00px;top:768.40px;" width="18" height="16" viewBox="0 0 18 16"><rect x="3.2" y="1.3" width="12.8" height="12.4" rx="1" fill="none" stroke="#e8622a" stroke-width="1.4"/><path d="M7.6,5.5 L5.9,7.4 L7.6,9.3 M10.6,5.5 L12.3,7.4 L10.6,9.3" fill="none" stroke="#e8622a" stroke-width="1.3"/></svg>
<div class="t" style="left:36.20px;top:768.96px;font-size:15.10px;color:#1f1f1f;letter-spacing:-0.166px;">collect?v=2&amp;tid=G-R22XXLLVRC&amp;gtm=45je5940h2v920173...=Daftar%20Santri&amp;en=page_view&amp;_e...</div>
<div class="t" style="left:716.40px;top:768.96px;font-size:15.10px;color:#1f1f1f;">204</div>
<div class="t" style="left:928.10px;top:768.96px;font-size:15.10px;color:#1f1f1f;">fetch</div>
<div class="t" style="left:1139.20px;top:768.96px;font-size:15.10px;color:#1f1f1f;letter-spacing:-0.735px;text-decoration:underline;text-underline-offset:1.5px;">js?id=G-R22XXLLVRC:209</div>
<div class="t" style="left:1651.80px;top:768.96px;font-size:15.10px;color:#1f1f1f;letter-spacing:-0.722px;">0.0 kB</div>
<div class="t" style="left:1854.80px;top:768.96px;font-size:15.10px;color:#1f1f1f;letter-spacing:-0.343px;">415 ms</div>
<div class="r" style="left:7.00px;top:789.55px;width:1901.00px;height:26.25px;background:#ffffff;"></div>
<svg class="r" style="left:17.00px;top:795.65px;" width="10" height="14" viewBox="0 0 10 14"><path d="M7.6,2 L2.6,2 L2.6,12 L7.6,12 M2.6,7 L7,7" fill="none" stroke="#c3cde0" stroke-width="1.1"/><path d="M3,12 L7.6,12 M3,7 L7,7" stroke="#e9dcc0" stroke-width="1.1"/></svg>
<svg class="r" style="left:36.00px;top:796.65px;" width="12" height="12" viewBox="0 0 12 12"><g transform="translate(5.9,5.6)" fill="#1f1f1f"><circle r="3.7" fill="none" stroke="#1f1f1f" stroke-width="1.0"/><rect x="-0.6" y="-5" width="1.2" height="1.4" transform="rotate(0)"/><rect x="-0.6" y="-5" width="1.2" height="1.4" transform="rotate(45)"/><rect x="-0.6" y="-5" width="1.2" height="1.4" transform="rotate(90)"/><rect x="-0.6" y="-5" width="1.2" height="1.4" transform="rotate(135)"/><rect x="-0.6" y="-5" width="1.2" height="1.4" transform="rotate(180)"/><rect x="-0.6" y="-5" width="1.2" height="1.4" transform="rotate(225)"/><rect x="-0.6" y="-5" width="1.2" height="1.4" transform="rotate(270)"/><rect x="-0.6" y="-5" width="1.2" height="1.4" transform="rotate(315)"/><circle r="1.0"/></g></svg>
<div class="t" style="left:52.50px;top:795.10px;font-size:15.10px;color:#1f1f1f;letter-spacing:-0.330px;">favicon.ico?1757046386998</div>
<div class="t" style="left:716.40px;top:795.10px;font-size:15.10px;color:#1f1f1f;">200</div>
<div class="t" style="left:928.10px;top:795.10px;font-size:15.10px;color:#1f1f1f;">fetch</div>
<div class="t" style="left:1139.20px;top:795.10px;font-size:15.10px;color:#1f1f1f;letter-spacing:-0.083px;text-decoration:underline;text-underline-offset:1.5px;">workbox-core.prod.js:1</div>
<div class="t" style="left:1651.80px;top:795.10px;font-size:15.10px;color:#1f1f1f;letter-spacing:-0.722px;">2.3 kB</div>
<div class="t" style="left:1854.80px;top:795.10px;font-size:15.10px;color:#1f1f1f;letter-spacing:-0.343px;">140 ms</div>
<div class="r" style="left:7.00px;top:815.80px;width:1901.00px;height:26.25px;background:#f8f9fd;"></div>
<svg class="r" style="left:13.00px;top:821.90px;" width="18" height="14" viewBox="0 0 18 14"><g fill="none" stroke="#e8622a" stroke-width="1.65" stroke-linecap="round"><path d="M6.6,1.9 Q4.1,1.9 3.7,4.3 L3.5,5.7 Q3.2,7 1.5,7 Q3.2,7 3.5,8.3 L3.7,9.9 Q4.1,12.2 6.6,12.2"/><path d="M11.1,1.9 Q13.6,1.9 14,4.3 L14.2,5.7 Q14.5,7 16.2,7 Q14.5,7 14.2,8.3 L14,9.9 Q13.6,12.2 11.1,12.2"/></g><circle cx="9.1" cy="4.4" r="1.15" fill="#e8622a"/><path d="M9.6,7.9 L8.5,10.4" stroke="#e8622a" stroke-width="1.7" stroke-linecap="round"/></svg>
<div class="t" style="left:36.20px;top:821.24px;font-size:15.10px;color:#1f1f1f;letter-spacing:-0.184px;">m-levels?isEducationTime=1&amp;education_name=4%20Tahun</div>
<div class="t" style="left:716.40px;top:821.24px;font-size:15.10px;color:#1f1f1f;">200</div>
<div class="t" style="left:928.10px;top:821.24px;font-size:15.10px;color:#1f1f1f;">fetch</div>
<div class="t" style="left:1139.20px;top:821.24px;font-size:15.10px;color:#1f1f1f;letter-spacing:-0.304px;text-decoration:underline;text-underline-offset:1.5px;">app-c1729047.6120de49.chunk.js:1</div>
<div class="t" style="left:1588.30px;top:821.24px;font-size:15.10px;color:#757575;letter-spacing:-0.435px;">(ServiceWorker)</div>
<div class="t" style="left:1854.80px;top:821.24px;font-size:15.10px;color:#1f1f1f;letter-spacing:-0.343px;">288 ms</div></div>
<div class="t" style="left:13.70px;top:581.22px;font-size:15.10px;color:#1f1f1f;">Name</div>
<div class="t" style="left:716.40px;top:581.22px;font-size:15.10px;color:#1f1f1f;">Status</div>
<div class="t" style="left:928.10px;top:581.22px;font-size:15.10px;color:#1f1f1f;">Type</div>
<div class="t" style="left:1139.20px;top:581.22px;font-size:15.10px;color:#1f1f1f;">Initiator</div>
<div class="t" style="left:1491.00px;top:581.22px;font-size:15.10px;color:#1f1f1f;">Size</div>
<div class="t" style="left:1702.80px;top:581.22px;font-size:15.10px;color:#1f1f1f;">Time</div>
<div class="r" style="left:709.80px;top:572.00px;width:1.00px;height:263.00px;background:#d8e3f6;"></div>
<div class="r" style="left:922.20px;top:572.00px;width:1.00px;height:263.00px;background:#d8e3f6;"></div>
<div class="r" style="left:1133.30px;top:572.00px;width:1.00px;height:263.00px;background:#d8e3f6;"></div>
<div class="r" style="left:1485.00px;top:572.00px;width:1.00px;height:263.00px;background:#d8e3f6;"></div>
<div class="r" style="left:1696.00px;top:572.00px;width:1.00px;height:263.00px;background:#d8e3f6;"></div>
<div class="r" style="left:7.50px;top:572.00px;width:1.00px;height:33.00px;background:#d8e3f6;"></div>
<div class="r" style="left:684.20px;top:713.10px;width:19.90px;height:19.70px;background:#d3e3fd;border-radius:5px;box-shadow:0 1px 2px rgba(0,0,0,.3)"></div>
<svg class="r" style="left:684.00px;top:713.00px;" width="21" height="20" viewBox="0 0 21 20"><path d="M9.2,3.1 L5,3.1 L5,13.6 L7.8,13.6 L10.4,16.1 L12.9,13.6 L16.4,13.6 L16.4,10.6" fill="none" stroke="#0a1f44" stroke-width="1.9"/><path d="M14.3,2 Q14.8,5 17.3,5.5 Q14.8,6 14.3,9 Q13.8,6 11.3,5.5 Q13.8,5 14.3,2 Z" fill="#0a1f44"/></svg>
<svg class="r" style="left:1910.00px;top:577.00px;" width="15" height="12" viewBox="0 0 15 12"><path d="M7.6,1.5 L13,9.8 L2.2,9.8 Z" fill="#8a8a8a" stroke="#8a8a8a" stroke-width="1.4" stroke-linejoin="round"/></svg>
<div class="r" style="left:1911.80px;top:594.80px;width:11.40px;height:21.30px;background:#8a8a8a;border-radius:5.7px"></div>
<svg class="r" style="left:1910.00px;top:819.00px;" width="15" height="12" viewBox="0 0 15 12"><path d="M2.2,1.5 L13,1.5 L7.6,10 Z" fill="#8a8a8a" stroke="#8a8a8a" stroke-width="1.4" stroke-linejoin="round"/></svg>
<div class="r" style="left:7.00px;top:835.00px;width:1918.00px;height:1.00px;background:#d0dff8;"></div>
<div class="r" style="left:7.00px;top:836.00px;width:1918.00px;height:26.00px;background:#ffffff;"></div>
<div class="t" style="left:20.10px;top:844.86px;font-size:14.70px;color:#474747;letter-spacing:-0.010px;">140 / 294 requests</div>
<div class="r" style="left:153.00px;top:840.00px;width:1.50px;height:22.00px;background:#d0dff8;"></div>
<div class="t" style="left:166.00px;top:844.86px;font-size:14.70px;color:#474747;letter-spacing:0.071px;">311 kB / 311 kB transferred</div>
<div class="r" style="left:357.00px;top:840.00px;width:1.50px;height:22.00px;background:#d0dff8;"></div>
<div class="t" style="left:370.20px;top:844.86px;font-size:14.70px;color:#474747;letter-spacing:-0.148px;">1,911 kB / 3,933 kB resources</div>
</div>
<svg class="r hl" style="left:-1.0px;top:648.0px" width="301.5" height="26.2"><path d="M1.0,5.3 L34.0,2.8 L101.0,1.1 L167.0,1.0 L251.0,2.3 L298.5,3.3 L300.5,7.0 L300.5,19.0 L298.5,22.0 L251.0,18.6 L167.0,17.8 L101.0,19.4 L34.0,23.6 L1.0,25.2 Z" fill="#ffe900"/></svg>
<svg class="r" style="left:0;top:648px;z-index:6" width="8" height="27"><path d="M0,5.3 L8,4.6 L8,25.1 L0,25.2 Z" fill="#ffe900"/></svg>
<svg class="r hl" style="left:42.0px;top:730.6px" width="268.5" height="31.0"><path d="M1.0,10.4 L78.0,6.4 L178.0,2.4 L267.5,1.0 L267.5,21.4 L158.0,23.4 L58.0,26.4 L1.0,30.0 Z" fill="#ffe900"/></svg>
<svg class="r hl" style="left:697.5px;top:653.7px" width="189.3" height="30.8"><path d="M1.0,7.8 L52.5,4.3 L188.3,1.0 L188.3,22.0 L102.5,24.3 L2.5,29.8 Z" fill="#ffe900"/></svg>
<svg class="r hl" style="left:692.4px;top:735.0px" width="81.6" height="25.7"><path d="M1.0,1.5 L47.6,1.0 L80.6,2.0 L80.6,24.7 L37.6,23.5 L1.0,23.0 Z" fill="#ffe900"/></svg>
</body></html>
